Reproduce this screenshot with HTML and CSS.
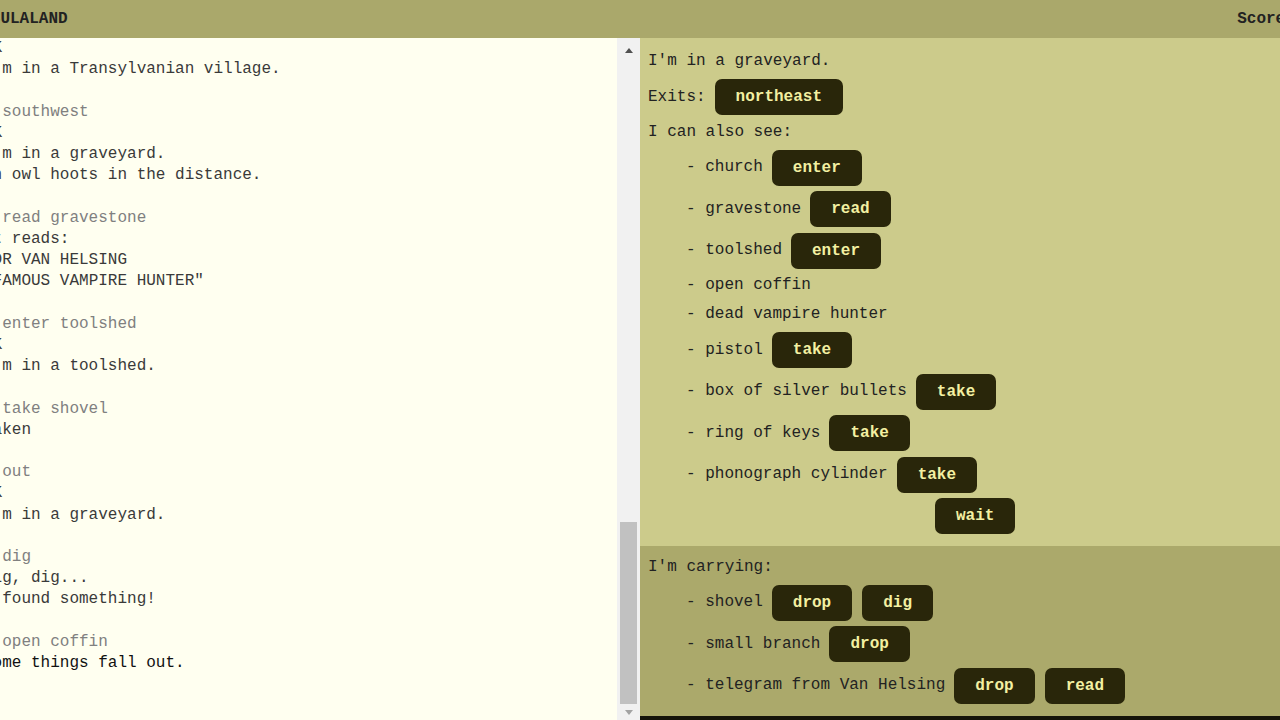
FILE: index.html
```html
<!DOCTYPE html>
<html lang="en">
<head>
    <meta charset="UTF-8">
    <meta name="viewport" content="width=device-width, initial-scale=1.0">
    <title>Draculaland</title>
    <link rel="stylesheet" href="styles.css">
</head>
<body>
<div class="page">
    <header class="topbar">
        <span class="title">DRACULALAND</span>
        <span class="score">Score: 0</span>
    </header>

    <main class="game">
        <div class="transcript">
            <!-- everything typed so far, newest at the bottom -->
            <div class="log" id="log">
<p>Welcome to DRACULALAND!</p>
<p>I'm in a railway station.
The last train has just left.</p>
<p><span class="cmd">&gt; look</span>
I'm in a railway station.
A porter is sweeping the platform.</p>
<p><span class="cmd">&gt; west</span>
You can't go that way.</p>
<p><span class="cmd">&gt; sit on bench</span>
The bench is wet with rain.
You decide to stand.</p>
<p><span class="cmd">&gt; talk to porter</span>
"A telegram came for you, sir."
He hands you a telegram.</p>
<p><span class="cmd">&gt; read telegram</span>
It reads:
"COME AT ONCE STOP THE COUNT
 HAS AWOKEN STOP VAN HELSING"</p>
<p><span class="cmd">&gt; north</span>
OK
I'm on a forest road.
Wolves howl somewhere nearby.</p>
<p><span class="cmd">&gt; take small branch</span>
Taken</p>
<p><span class="cmd">&gt; north</span>
OK
I'm on a forest road.
The trees grow thick and dark.</p>
<p><span class="cmd">&gt; east</span>
You can't go that way.</p>
<p><span class="cmd">&gt; north</span>
OK
I'm at a river crossing.
A rickety bridge spans the water.</p>
<p><span class="cmd">&gt; cross bridge</span>
OK
I'm in a Transylvanian village.
Shutters slam as you pass.</p>
<p><span class="cmd">&gt; enter inn</span>
OK
I'm in an inn.
The innkeeper eyes you warily.</p>
<p><span class="cmd">&gt; talk to innkeeper</span>
"Go home, stranger. Nobody goes
 to the graveyard after dark."</p>
<p><span class="cmd">&gt; ask about Van Helsing</span>
"The doctor? He went to the
 graveyard three nights ago.
 He has not come back."</p>
<p><span class="cmd">&gt; take mug</span>
The innkeeper snatches it back.</p>
<p><span class="cmd">&gt; inventory</span>
I'm carrying:
- telegram from Van Helsing
- small branch</p>
<p><span class="cmd">&gt; buy room</span>
The inn is full tonight.</p>
<p><span class="cmd">&gt; wait</span>
Time passes.
The clock strikes eleven.</p>
<p><span class="cmd">&gt; out</span>
OK
I'm in a Transylvanian village.</p>
<p><span class="cmd">&gt; southwest</span>
OK
I'm in a graveyard.
An owl hoots in the distance.</p>
<p><span class="cmd">&gt; read gravestone</span>
It reads:
"DR VAN HELSING
 FAMOUS VAMPIRE HUNTER"</p>
<p><span class="cmd">&gt; enter toolshed</span>
OK
I'm in a toolshed.</p>
<p><span class="cmd">&gt; take shovel</span>
Taken</p>
<p><span class="cmd">&gt; out</span>
OK
I'm in a graveyard.</p>
<p><span class="cmd">&gt; dig</span>
Dig, dig...
I found something!</p>
<p class="latest"><span class="cmd">&gt; open coffin</span>
Some things fall out.</p>
            </div>
            <div class="scrollbar">
                <span class="arrow up"></span>
                <div class="track" id="track"><div class="thumb" id="thumb"></div></div>
                <span class="arrow down"></span>
            </div>
        </div>

        <div class="side">
            <section class="room">
                <div class="row">I'm in a graveyard.</div>
                <div class="row">Exits: <button class="act">northeast</button></div>
                <div class="row">I can also see:</div>
                <ul class="things">
                    <li class="row">- church <button class="act">enter</button></li>
                    <li class="row">- gravestone <button class="act">read</button></li>
                    <li class="row">- toolshed <button class="act">enter</button></li>
                    <li class="row">- open coffin</li>
                    <li class="row">- dead vampire hunter</li>
                    <li class="row">- pistol <button class="act">take</button></li>
                    <li class="row">- box of silver bullets <button class="act">take</button></li>
                    <li class="row">- ring of keys <button class="act">take</button></li>
                    <li class="row">- phonograph cylinder <button class="act">take</button></li>
                </ul>
                <div class="row turn"><button class="act">wait</button></div>
            </section>

            <section class="carrying">
                <div class="row">I'm carrying:</div>
                <ul class="things">
                    <li class="row">- shovel <button class="act">drop</button><button class="act">dig</button></li>
                    <li class="row">- small branch <button class="act">drop</button></li>
                    <li class="row">- telegram from Van Helsing <button class="act">drop</button><button class="act">read</button></li>
                </ul>
            </section>

            <div class="prompt"></div>
        </div>
    </main>
</div>

<script>
    // keep the newest lines of the transcript in view
    const log = document.getElementById('log');
    log.scrollTop = log.scrollHeight;

    // size the thumb to the visible share of the transcript
    const track = document.getElementById('track');
    const thumb = document.getElementById('thumb');
    thumb.style.height = Math.round(track.clientHeight * log.clientHeight / log.scrollHeight) + 'px';
</script>
</body>
</html>
```

FILE: styles.css
```css
body {
    margin: 0;
    overflow: hidden;
    font-family: "Courier New", "Liberation Mono", monospace;
    font-size: 16px;
    color: #222;
    background: #fffff0;
}
.page {
    /* the game is a little wider than the window */
    width: calc(100% + 96px);
    margin-left: -48px;
    height: 100vh;
    display: flex;
    flex-direction: column;
}
.topbar {
    height: 38px;
    flex-shrink: 0;
    display: flex;
    align-items: center;
    justify-content: space-between;
    padding: 0 14px 0 10px;
    background-color: #aaa86b;
    font-weight: bold;
    color: #222;
}
.game {
    flex: 1;
    min-height: 0;
    display: grid;
    grid-template-columns: 1fr 1fr;
}

/* transcript */
.transcript {
    display: flex;
    min-height: 0;
    background-color: #fffff0;
}
.log {
    flex: 1;
    overflow: hidden;
    padding: 8px 10px 25px 31px;
    line-height: 21.2px;
    color: #3a3a3a;
}
.log p {
    margin: 0 0 21.2px;
    white-space: pre-wrap;
}
.log .cmd {
    color: #808080;
}
.log .latest {
    color: #111;
}
.scrollbar {
    width: 23px;
    flex-shrink: 0;
    display: flex;
    flex-direction: column;
    background-color: #f1f1f1;
}
.arrow {
    display: flex;
    align-items: center;
    justify-content: center;
}
.arrow.up {
    height: 24px;
}
.arrow.down {
    height: 16px;
}
.arrow::before {
    content: "";
    border-left: 4px solid transparent;
    border-right: 4px solid transparent;
}
.arrow.up::before {
    border-bottom: 5px solid #505050;
}
.arrow.down::before {
    border-top: 5px solid #a3a3a3;
}
.track {
    flex: 1;
    display: flex;
    flex-direction: column;
    justify-content: flex-end;
    padding: 0 3px;
}
.thumb {
    background-color: #c1c1c1;
}

/* room and inventory */
.side {
    display: flex;
    flex-direction: column;
    min-height: 0;
}
.room {
    background-color: #cccb8b;
    padding: 9.5px 8px 9px;
}
.carrying {
    background-color: #aba96b;
    padding: 7px 8px 9.5px;
}
.prompt {
    flex: 1;
    background-color: #15140a;
}
.row {
    display: flex;
    align-items: center;
    gap: 9px;
    min-height: 23.5px;
    line-height: 23.5px;
    padding: 2.75px 0;
    white-space: nowrap;
}
.things {
    list-style: none;
    margin: 0;
    padding: 0 0 0 38px;
}
.things .act + .act {
    margin-left: 1px;
}
.turn {
    padding-left: 287px;
}
.act {
    height: 36px;
    padding: 0 21px;
    border: none;
    border-radius: 7px;
    background-color: #29260a;
    color: #f3f0a2;
    font-family: "Courier New", "Liberation Mono", monospace;
    font-size: 16px;
    font-weight: bold;
    cursor: pointer;
}
.act:hover {
    background-color: #3d3912;
}
```
